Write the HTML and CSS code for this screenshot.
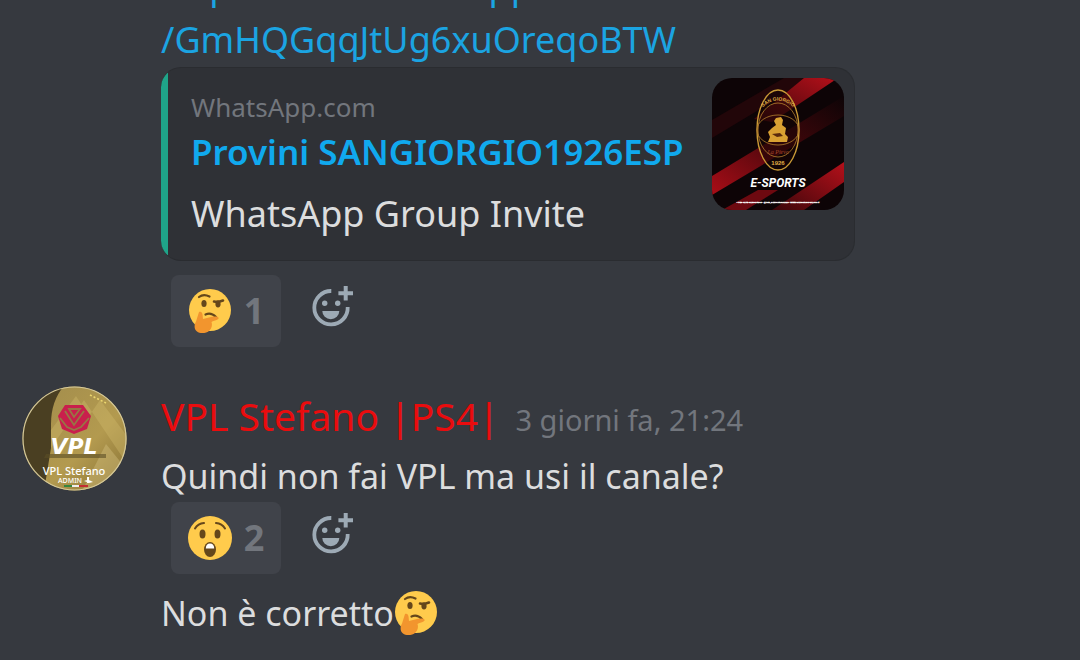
FILE: index.html
```html
<!DOCTYPE html>
<html lang="it">
<head>
  <meta charset="UTF-8" />
  <title>Chat</title>
  <meta name="viewport" content="width=device-width, initial-scale=1.0"/>
  <link rel="stylesheet" href="styles.css">
</head>
<body>

  <!-- shared icons -->
  <svg class="sprite" aria-hidden="true">
    <symbol id="thinking" viewBox="0 0 44 46">
      <circle cx="22" cy="22" r="21" fill="#ffcb4c"/>
      <ellipse cx="16" cy="15.500" rx="2.600" ry="3.600" fill="#65471b"/>
      <ellipse cx="30" cy="16" rx="2.600" ry="3.400" fill="#65471b"/>
      <path d="M11 9Q15.500 5.500 21.500 8.500" fill="none" stroke="#65471b" stroke-width="2.200" stroke-linecap="round"/>
      <path d="M26 13.500Q30 14.500 35 12.500" fill="none" stroke="#65471b" stroke-width="2.600" stroke-linecap="round"/>
      <path d="M17.500 26.500Q23 24 28 29" fill="none" stroke="#65471b" stroke-width="2.200" stroke-linecap="round"/>
      <path d="M11 24c2.400-.8 3.400 1 3.600 3l.4 4c4-1.200 8-2.400 12-2.600 4-.2 4.500 2 2.500 3-2 1-4.500 1.500-6 2.500 1 2.500.5 6-2 8.500-3 3-9.500 3.500-12.500 1-3-2.500-3-6.500-1-10z" fill="#f2952e"/>
    </symbol>
    <symbol id="astonished" viewBox="0 0 44 46">
      <circle cx="22" cy="23" r="22" fill="#ffcb4c"/>
      <ellipse cx="14.500" cy="19" rx="3" ry="4.600" fill="#65471b"/>
      <ellipse cx="29.500" cy="19" rx="3" ry="4.600" fill="#65471b"/>
      <path d="M7 13.500Q10 8.500 16 8M37 13.500Q34 8.500 28 8" fill="none" stroke="#65471b" stroke-width="2" stroke-linecap="round"/>
      <ellipse cx="22" cy="34.500" rx="6" ry="7.500" fill="#65471b"/>
      <path d="M17.800 33.500Q18 28.500 22 28.500T26.200 33.500Z" fill="#fff"/>
    </symbol>
    <symbol id="add-reaction" viewBox="0 0 42 42">
      <path d="M19.300 6A16.700 16.700 0 1 0 35.700 22" fill="none" stroke="#9daab5" stroke-width="3.800"/>
      <circle cx="12.700" cy="18.300" r="2.700" fill="#9daab5"/>
      <circle cx="25.700" cy="18.300" r="2.700" fill="#9daab5"/>
      <path d="M10.300 26H27.300A8.500 8.300 0 0 1 10.300 26Z" fill="#9daab5"/>
      <path d="M33.700 1V15.600M26.400 8.300H41" stroke="#9daab5" stroke-width="4"/>
    </symbol>
  </svg>

  <main class="chat">
    <article class="message">
      <div class="content">
        <a class="link" href="#">https://chat.whatsapp.com<br>/GmHQGqqJtUg6xuOreqoBTW</a>

        <section class="embed">
          <div class="embed-text">
            <div class="provider">WhatsApp.com</div>
            <a class="embed-title" href="#">Provini SANGIORGIO1926ESP</a>
            <div class="description">WhatsApp Group Invite</div>
          </div>
          <svg class="thumb" viewBox="0 0 132 132" role="img" aria-label="San Giorgio 1926 E-Sports">
            <defs>
              <linearGradient id="band" x1="0" y1="1" x2="1" y2="0">
                <stop offset="0" stop-color="#a90d17"/>
                <stop offset=".6" stop-color="#3a060a"/>
                <stop offset="1" stop-color="#0d0406"/>
              </linearGradient>
              <linearGradient id="bandTop" x1="0" y1="1" x2="1" y2="0">
                <stop offset="0" stop-color="#3a060a"/>
                <stop offset="1" stop-color="#b5101a"/>
              </linearGradient>
            </defs>
            <rect width="132" height="132" fill="#0d0406"/>
            <path d="M0 60L100 0H72L0 42Z" fill="#220609"/>
            <path d="M0 98L132 18V38L0 117Z" fill="url(#band)"/>
            <path d="M42 41L92 0H126L60 44Z" fill="url(#bandTop)"/>
            <path d="M60 132L132 84V104L92 132Z" fill="url(#bandTop)"/>
            <path d="M10 132L46 112H66L34 132Z" fill="#6d0910"/>
            <ellipse cx="66" cy="52" rx="21" ry="40" fill="#170506" fill-opacity=".55" stroke="#c99a36" stroke-width="1.400"/>
            <g fill="none" stroke="#b6812f" stroke-width=".8">
              <ellipse cx="66" cy="52" rx="20" ry="27"/>
              <ellipse cx="66" cy="52" rx="21" ry="15"/>
            </g>
            <path d="M64 40l5-1 2 3-1 5 4 3-1 6 3 3-1 5H56l2-5-2-5 4-4 4-3-2-4z" fill="#d9a032"/>
            <path d="M60 56l8-1 3 3-6 1z" fill="#5a2a0c"/>
            <path id="arc" d="M49 31Q66 14 83 31" fill="none"/>
            <text class="crest-name"><textPath href="#arc" startOffset="50%" text-anchor="middle">SAN GIORGIO</textPath></text>
            <text class="crest-sign" x="66" y="76" text-anchor="middle">La Pieve</text>
            <text class="crest-year" x="66" y="87" text-anchor="middle">1926</text>
            <text class="crest-title" x="66" y="109" text-anchor="middle">E-SPORTS</text>
            <text class="crest-note" x="66" y="125" text-anchor="middle">● PES CLUB SANGIORGIO · @ASD_SANGIORGIO1926 · WWW.SANGIORGIOCALCIO.IT</text>
          </svg>
        </section>

        <div class="reactions">
          <button class="reaction" aria-label="Pensieroso, 1"><svg class="emoji"><use href="#thinking"/></svg><span>1</span></button>
          <button class="add" aria-label="Aggiungi reazione"><svg class="add-icon"><use href="#add-reaction"/></svg></button>
        </div>
      </div>
    </article>

    <article class="message">
      <svg class="avatar" viewBox="0 0 105 105" role="img" aria-label="VPL Stefano">
        <defs>
          <linearGradient id="gold" x1="0" y1="0" x2="1" y2="1">
            <stop offset="0" stop-color="#a08b4c"/>
            <stop offset=".6" stop-color="#b39a4f"/>
            <stop offset="1" stop-color="#857033"/>
          </linearGradient>
          <clipPath id="round"><circle cx="52.500" cy="52.500" r="52"/></clipPath>
        </defs>
        <g clip-path="url(#round)">
          <rect width="105" height="105" fill="url(#gold)"/>
          <path d="M0 0H42Q29 15 29 38V62L22 105H0Z" fill="#4a3f22"/>
          <path d="M29 62L62 14 105 78V50L78 14 67 30 54 10 29 44Z" fill="#d0b86c" opacity=".4"/>
          <path d="M60 105L84 58 105 84V105Z" fill="#d8c482" opacity=".4"/>
          <path d="M24 68H84V72H22Z" fill="#5c4e26" opacity=".6"/>
          <path d="M42 99H50V101H42Z" fill="#35853f"/>
          <path d="M50 99H57V101H50Z" fill="#eee"/>
          <path d="M57 99H66V101H57Z" fill="#c32d32"/>
        </g>
        <circle cx="52.500" cy="52.500" r="51.500" fill="none" stroke="#d5c99a" stroke-width="1.200"/>
        <path d="M68 9L84 17" stroke="#ecd770" stroke-width="1.600" stroke-dasharray="2 2"/>
        <path d="M43 19H61L69 30 65 43 52 48 40 43 36 30Z" fill="#c91f4c"/>
        <path d="M43 25L52 39 62 25M38 32L45 41 52 44 59 41 67 32M47 23H58L52 31Z" fill="none" stroke="#977644" stroke-width="1.800"/>
        <text class="avatar-logo" x="52" y="68" text-anchor="middle">VPL</text>
        <text class="avatar-name" x="52" y="89" text-anchor="middle">VPL Stefano</text>
        <text class="avatar-role" x="36" y="97">ADMIN</text>
        <path d="M65 91V97H67V91ZM62 95L65 94V96ZM67 94L71 96 67 97Z" fill="#fff"/>
      </svg>

      <div class="content">
        <header class="message-header">
          <span class="author">VPL Stefano |PS4|</span>
          <time class="timestamp">3 giorni fa, 21:24</time>
        </header>
        <p class="text">Quindi non fai VPL ma usi il canale?</p>
        <div class="reactions tight">
          <button class="reaction" aria-label="Stupito, 2"><svg class="emoji"><use href="#astonished"/></svg><span>2</span></button>
          <button class="add" aria-label="Aggiungi reazione"><svg class="add-icon"><use href="#add-reaction"/></svg></button>
        </div>
        <p class="text">Non è corretto<svg class="emoji" role="img" aria-label="Pensieroso"><use href="#thinking"/></svg></p>
      </div>
    </article>
  </main>

</body>
</html>
```
FILE: styles.css
```css
* {
  box-sizing: border-box;
}
body {
  margin: 0;
  background: #36393f;
  color: #dcddde;
  font-family: "Noto Sans", "Open Sans", sans-serif;
  font-size: 36px;
  line-height: 54px;
}
a {
  text-decoration: none;
}
.sprite {
  position: absolute;
  width: 0;
  height: 0;
}

/* newest message stays at the bottom, older ones run off the top */
.chat {
  display: flex;
  flex-direction: column;
  justify-content: flex-end;
  gap: 39px;
  height: 100vh;
  overflow: hidden;
  padding: 0 22px;
}
.message {
  display: grid;
  grid-template-columns: 105px 1fr;
  column-gap: 34px;
  flex: none;
}
.message:last-child {
  padding-bottom: 21px;
}
.content {
  grid-column: 2;
}
.link {
  display: block;
  color: #1ba4e2;
}

.embed {
  display: flex;
  justify-content: space-between;
  gap: 20px;
  max-width: 694px;
  min-height: 194px;
  padding: 10px;
  padding-left: 30px;
  background: linear-gradient(90deg, #1fa489 7px, #2f3136 7px);
  border: 1px solid #2a2c30;
  border-left: none;
  border-radius: 20px;
}
.embed-text {
  padding-top: 11px;
}
.provider {
  font-size: 26px;
  line-height: 36px;
  color: #72767d;
}
.embed-title {
  display: block;
  font-size: 35px;
  font-weight: 600;
  color: #10a9ee;
}
.description {
  margin-top: 8px;
}
.thumb {
  width: 132px;
  height: 132px;
  border-radius: 20px;
  flex: none;
}
.crest-name {
  font: bold 5px "Liberation Sans", sans-serif;
  fill: #e0ae45;
}
.crest-sign {
  font: italic 6px "Liberation Serif", serif;
  fill: #a4482a;
}
.crest-year {
  font: bold 6px "Liberation Sans", sans-serif;
  fill: #e0ae45;
}
.crest-title {
  font: italic bold 12px Roboto, "Liberation Sans", sans-serif;
  fill: #fff;
}
.crest-note {
  font: bold 2px "Liberation Sans", sans-serif;
  fill: #fff;
  stroke: #fff;
  stroke-width: .3px;
}

.reactions {
  display: flex;
  align-items: flex-start;
  gap: 31px;
  margin-top: 14px;
  padding-left: 10px;
}
.reactions.tight {
  margin-top: 0;
  margin-bottom: 13px;
}
button {
  border: none;
  background: none;
  padding: 0;
  font: inherit;
  color: inherit;
  cursor: pointer;
}
.reaction {
  display: flex;
  align-items: center;
  justify-content: center;
  gap: 12px;
  width: 110px;
  height: 72px;
  border-radius: 8px;
  background: #40434a;
  color: #72767d;
  font-weight: bold;
}
.emoji {
  width: 44px;
  height: 46px;
}
.add {
  padding-top: 10px;
  line-height: 0;
}
.add-icon {
  width: 42px;
  height: 42px;
}

.avatar {
  width: 105px;
  height: 105px;
}
.avatar-logo {
  font: italic bold 22px "DejaVu Sans", sans-serif;
  fill: #fff;
}
.avatar-name {
  font: 500 11px "Noto Sans", sans-serif;
  fill: #fff;
}
.avatar-role {
  font: 500 7px "Noto Sans", sans-serif;
  fill: #fff;
}
.message-header {
  display: flex;
  align-items: baseline;
  gap: 16px;
  padding-top: 6px;
  margin-bottom: 10px;
  line-height: 48px;
}
.author {
  font-size: 39px;
  color: #ea0c0e;
}
.timestamp {
  font-size: 29px;
  line-height: 36px;
  color: #72767d;
}
.text {
  margin: 0;
  font-size: 34px;
  line-height: 52px;
}
.text .emoji {
  vertical-align: -10px;
}
```
